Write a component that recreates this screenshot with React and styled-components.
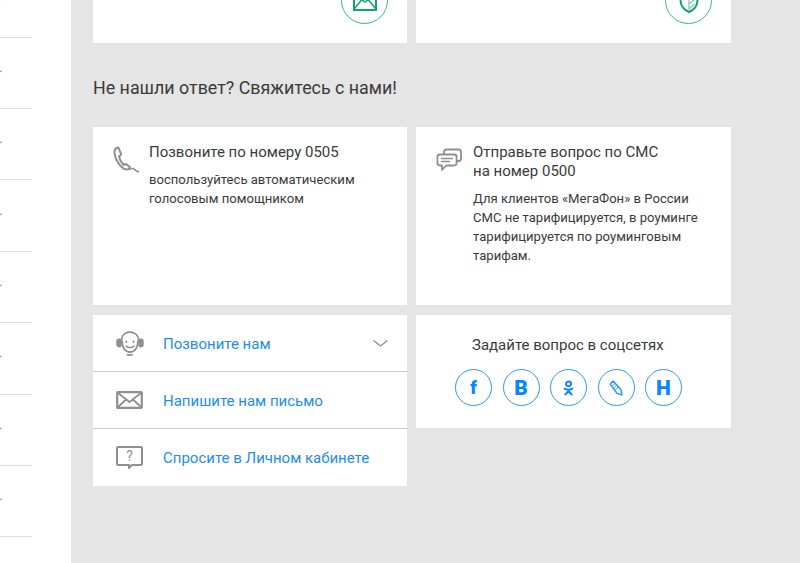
import styled, { createGlobalStyle } from "styled-components"

const GlobalStyle = createGlobalStyle`
	html, body {
		margin: 0;
		padding: 0;
		height: 563px;
		overflow: hidden;
		background: #e5e5e5;
		font-family: Roboto, "Liberation Sans", sans-serif;
		color: #333;
	}
`

const sideItems = [0, 1, 2, 3, 4, 5, 6, 7]

const GreyIcon = ({ w, h, width = 1.8, children }) => (
	<svg width={w} height={h} viewBox={`0 0 ${w} ${h}`} fill="none" stroke="#8f8f8f" strokeWidth={width} strokeLinecap="round" strokeLinejoin="round">
		{children}
	</svg>
)

const PhoneIcon = () => (
	<GreyIcon w={27} h={28} width={2}>
		<path d="M5.500 1.500C3 1.800 1.300 3.700 1.500 6.500c.4 4.800 3 9.800 6 13.300 2.400 2.700 5 4 7.500 3.500 1.200-.3 1.800-1 2-2l-4-3.300-2.500 1c-2.200-2.300-3.900-5.500-4.500-8.700l2.200-1.600z" />
		<path d="M16 23c1.500.8 2.500-.7 4-.4 1.600.4 2.800 2.900 5.500 3.200" strokeWidth="1.500" />
	</GreyIcon>
)

const SmsIcon = () => (
	<GreyIcon w={27} h={24}>
		<path d="M8 6V4C8 2.600 9 1.500 10.400 1.500h12.200C24 1.500 25 2.600 25 4v6.500c0 1.400-1 2.500-2.400 2.500H21" />
		<path d="M3.800 6.500h14.400c1.400 0 2.400 1 2.400 2.400v6.200c0 1.400-1 2.400-2.400 2.400h-8L6 22v-4.500H3.800c-1.400 0-2.400-1-2.400-2.400V8.900c0-1.400 1-2.400 2.400-2.400z" />
		<path d="M5.500 10.500h11M5.500 13.500h8" strokeWidth="1.400" />
	</GreyIcon>
)

const OperatorIcon = () => (
	<GreyIcon w={28} h={25}>
		<path d="M5.500 8.500C6 4 9.500 1.200 14 1.200s8 2.800 8.500 7.300" />
		<path d="M6 10c0 6.500 3.200 11 8 11s8-4.500 8-11" />
		<rect x="1.200" y="8.500" width="3.600" height="7" rx="1.800" fill="#8f8f8f" />
		<rect x="23.200" y="8.500" width="3.600" height="7" rx="1.800" fill="#8f8f8f" />
		<path d="M10 15c2 2.200 6 2.200 8 0" strokeWidth="1.400" />
		<path d="M10.500 10.500v.6M17.500 10.500v.6" />
		<path d="M11.500 23.800h4.500" />
	</GreyIcon>
)

const LetterIcon = () => (
	<GreyIcon w={27} h={18}>
		<rect x="1.200" y="1.200" width="24.600" height="15.600" rx=".6" strokeWidth="2.200" />
		<path d="M2 2l11.500 9L25 2M2 16l8-7.500M25 16l-8-7.500" />
	</GreyIcon>
)

const AskIcon = () => (
	<svg width="27" height="23" viewBox="0 0 27 23" fill="none" stroke="#8f8f8f" strokeWidth="2" strokeLinejoin="round">
		<path d="M2 1h23c.6 0 1 .4 1 1v16c0 .6-.4 1-1 1H16l-3 3v-3H2c-.6 0-1-.4-1-1V2c0-.6.4-1 1-1z" />
		<text x="13.500" y="15" textAnchor="middle" fontSize="14" fontFamily="Roboto, sans-serif" fill="#8f8f8f" stroke="none">?</text>
	</svg>
)

const Chevron = () => (
	<svg width="15" height="7" viewBox="0 0 15 7" fill="none" stroke="#888" strokeWidth="1.200">
		<path d="M.5.5l7 5.500 7-5.500" />
	</svg>
)

const MailBadge = () => (
	<svg width="24" height="20" viewBox="0 0 24 20" fill="none" stroke="#12a26f" strokeWidth="2">
		<rect x="1" y="1" width="22" height="18" />
		<path d="M1 2l11 9 11-9M1 18l8-9.500M23 18l-8-9.500" strokeWidth="1.500" />
	</svg>
)

const LeafBadge = () => (
	<svg width="20" height="26" viewBox="0 0 20 26" fill="none" stroke="#12a26f" strokeWidth="2">
		<path d="M10 1C5 3 1.500 6 1.500 12c0 6 4 10 8.500 12 4.500-2 8.500-6 8.500-12 0-6-3.500-9-8.500-11z" />
		<path d="M10 3v20M10 11l6-4M10 16l6.500-5M10 21l5.500-5" strokeWidth="1.400" stroke="#8fcfb4" />
	</svg>
)

const OkGlyph = () => (
	<svg width="11" height="16" viewBox="0 0 12 17" fill="none" stroke="#0a84ff" strokeWidth="2.200" strokeLinecap="round">
		<circle cx="6" cy="4" r="2.700" />
		<path d="M1.800 9.200c2.500 1.500 5.900 1.500 8.400 0M6 10.500v1.500M6 12l-3.500 3.500M6 12l3.500 3.500" />
	</svg>
)

const PencilGlyph = () => (
	<svg width="14" height="18" viewBox="0 0 14 18" fill="none" stroke="#2f96ff" strokeWidth="1.500" strokeLinejoin="round">
		<path d="M1.200 5L4.200 2 12 10.800l1 5.200-5-1.600z" />
		<path d="M3.500 7l3-3M5 8.800l3-3M6.500 10.800l3-3" strokeWidth="1" />
	</svg>
)

const App = () => (
	<>
		<GlobalStyle />
		<Page>
			<Sidebar>
				{sideItems.map(i => (
					<SideItem key={i}>
						<SideTick />
					</SideItem>
				))}
			</Sidebar>
			<Main>
				<Grid>
					<TopCard><Badge><MailBadge /></Badge></TopCard>
					<TopCard><Badge><LeafBadge /></Badge></TopCard>
				</Grid>
				<Heading>Не нашли ответ? Свяжитесь с нами!</Heading>
				<Grid>
					<InfoCard>
						<PhoneSlot><PhoneIcon /></PhoneSlot>
						<InfoBody>
							<InfoTitle>Позвоните по номеру 0505</InfoTitle>
							<InfoText>воспользуйтесь автоматическим<br />голосовым помощником</InfoText>
						</InfoBody>
					</InfoCard>
					<InfoCard>
						<SmsSlot><SmsIcon /></SmsSlot>
						<InfoBody>
							<InfoTitle>Отправьте вопрос по СМС<br />на номер 0500</InfoTitle>
							<InfoText>Для клиентов «МегаФон» в России<br />СМС не тарифицируется, в роуминге<br />тарифицируется по роуминговым<br />тарифам.</InfoText>
						</InfoBody>
					</InfoCard>
				</Grid>
				<BottomGrid>
					<LinkList>
						<LinkRow>
							<LinkIcon><OperatorIcon /></LinkIcon>
							<LinkLabel>Позвоните нам</LinkLabel>
							<ChevronSlot><Chevron /></ChevronSlot>
						</LinkRow>
						<LinkRow>
							<LinkIcon><LetterIcon /></LinkIcon>
							<LinkLabel>Напишите нам письмо</LinkLabel>
						</LinkRow>
						<LinkRow>
							<LinkIcon><AskIcon /></LinkIcon>
							<LinkLabel>Спросите в Личном кабинете</LinkLabel>
						</LinkRow>
					</LinkList>
					<SocialCard>
						<SocialTitle>Задайте вопрос в соцсетях</SocialTitle>
						<SocialRow>
							<SocialButton>f</SocialButton>
							<SocialButton $heavy>В</SocialButton>
							<SocialButton><OkGlyph /></SocialButton>
							<SocialButton><PencilGlyph /></SocialButton>
							<SocialButton $heavy>Н</SocialButton>
						</SocialRow>
					</SocialCard>
				</BottomGrid>
			</Main>
		</Page>
	</>
)

const Page = styled.div`
	display: flex;
	height: 563px;
	overflow: hidden;
`
const Sidebar = styled.div`
	width: 71px;
	flex-shrink: 0;
	background: #fff;
	margin-top: -33.800px;
	height: 597px;
	overflow: hidden;
`
const SideItem = styled.div`
	box-sizing: border-box;
	width: 32px;
	height: 71.400px;
	border-bottom: 1px solid #ddd;
	display: flex;
	align-items: center;
	overflow: hidden;
`
const SideTick = styled.span`
	width: 3px;
	height: 1px;
	margin: 0 0 3px -1px;
	background: #8c8c8c;
	transform: rotate(-35deg);
`
const Main = styled.div`
	flex: 1;
	padding-left: 22px;
`
const Grid = styled.div`
	display: grid;
	grid-template-columns: 314px 315px;
	column-gap: 9px;
`
const BottomGrid = styled(Grid)`
	margin-top: 10px;
	align-items: start;
`
const TopCard = styled.div`
	position: relative;
	height: 43px;
	background: #fff;
`
const Badge = styled.div`
	position: absolute;
	right: 19px;
	bottom: 19px;
	box-sizing: border-box;
	width: 47px;
	height: 47px;
	border: 1px solid #3bb58c;
	border-radius: 50%;
	display: flex;
	align-items: center;
	justify-content: center;
`
const Heading = styled.h2`
	margin: 0;
	height: 84px;
	box-sizing: border-box;
	padding-top: 34px;
	font-size: 17.850px;
	line-height: 22px;
	font-weight: 400;
	color: #3a3a3a;
`
const InfoCard = styled.div`
	display: flex;
	height: 178px;
	box-sizing: border-box;
	padding-top: 16px;
	background: #fff;
`
const PhoneSlot = styled.div`
	width: 56px;
	padding: 3px 0 0 20px;
	box-sizing: border-box;
	flex-shrink: 0;
`
const SmsSlot = styled(PhoneSlot)`
	width: 57px;
	padding-left: 20px;
	padding-top: 5px;
`
const InfoBody = styled.div`
	flex: 1;
`
const InfoTitle = styled.div`
	font-size: 15px;
	line-height: 19px;
	color: #3a3a3a;
`
const InfoText = styled.div`
	margin-top: 8px;
	font-size: 13.100px;
	line-height: 19px;
	color: #3a3a3a;
`
const LinkList = styled.div`
	background: #fff;
`
const LinkRow = styled.div`
	display: flex;
	align-items: center;
	box-sizing: border-box;
	height: 57px;
	border-bottom: 1px solid #ccc;

	&:last-child {
		border-bottom: 0;
		padding-bottom: 1px;
	}
`
const LinkIcon = styled.div`
	width: 70px;
	padding-left: 23px;
	box-sizing: border-box;
	display: flex;
	flex-shrink: 0;
`
const LinkLabel = styled.div`
	flex: 1;
	padding-top: 2px;
	font-size: 15px;
	color: #1e8cf0;
`
const ChevronSlot = styled.div`
	display: flex;
	padding-right: 19px;
`
const SocialCard = styled.div`
	height: 113px;
	box-sizing: border-box;
	padding: 21px 0 0 39px;
	background: #fff;
`
const SocialTitle = styled.div`
	padding-left: 17px;
	font-size: 15px;
	line-height: 19px;
	color: #3a3a3a;
`
const SocialRow = styled.div`
	display: flex;
	gap: 10.500px;
	margin-top: 14px;
`
const SocialButton = styled.div`
	box-sizing: border-box;
	width: 37px;
	height: 37px;
	border: 1px solid #2f96ff;
	border-radius: 50%;
	display: flex;
	align-items: center;
	justify-content: center;
	font-weight: 900;
	font-size: ${props => props.$heavy ? "21px" : "18px"};
	color: #0a84ff;
`

export default App
